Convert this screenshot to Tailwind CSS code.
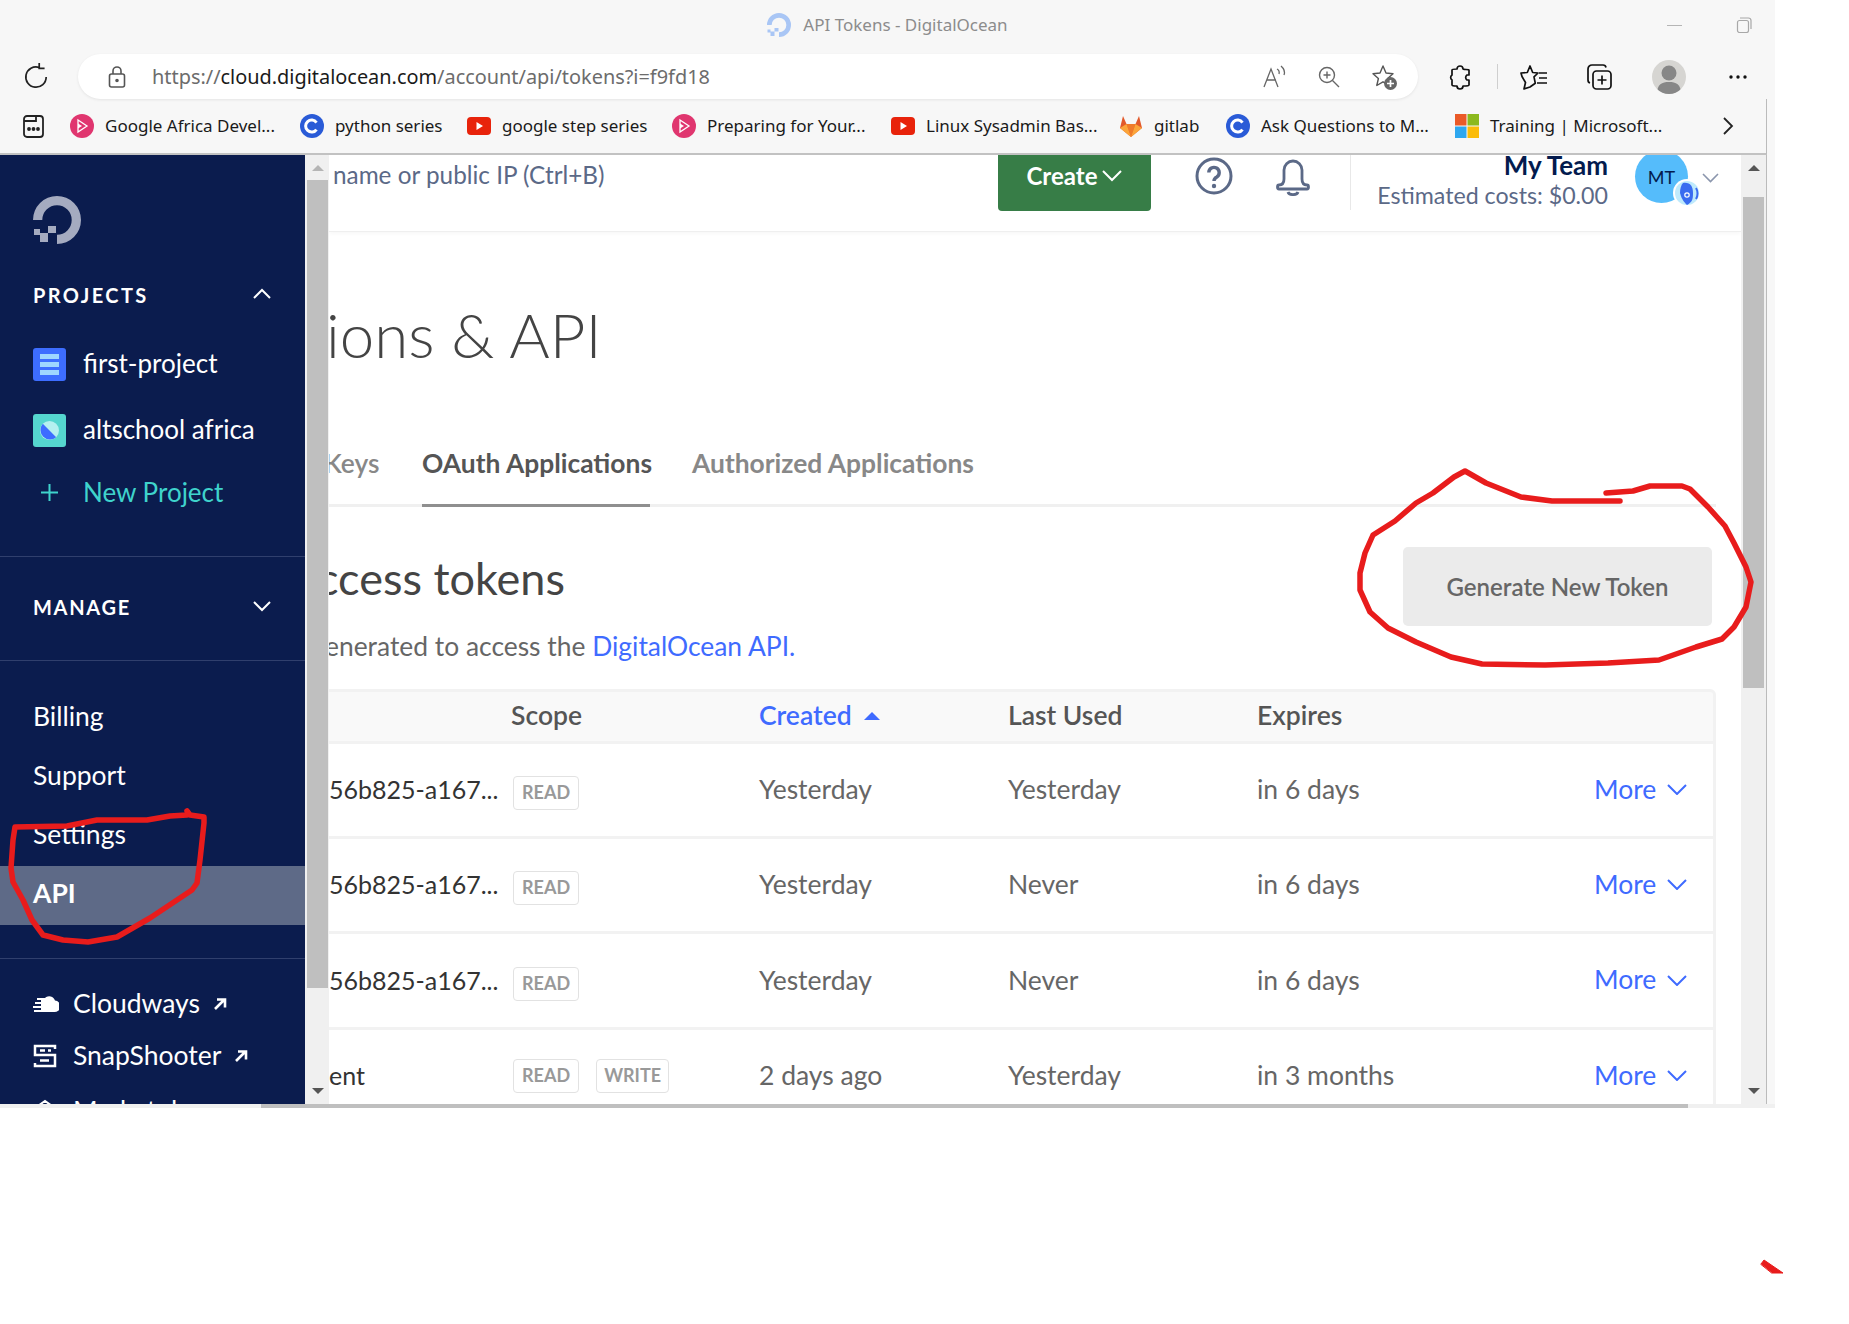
<!DOCTYPE html>
<html lang="en">
<head>
<meta charset="UTF-8" />
<title>API Tokens - DigitalOcean</title>
<script src="https://cdn.jsdelivr.net/npm/@tailwindcss/browser@4"></script>
</head>
<body class="bg-white">
<div class="relative w-[1849px] h-[1324px] overflow-hidden bg-white font-['Lato',sans-serif]">
  <div class="w-[1775px]">

    <!-- browser chrome -->
    <div class="bg-[#f7f7f7] font-['Noto_Sans',sans-serif]">
      <div class="h-[54px] grid grid-cols-[1fr_auto_1fr] items-center pb-[4px]">
        <div></div>
        <div class="flex items-center gap-[12px] text-[17px] text-[#8c8c8c]">
          <svg class="w-[24px] h-[24px]" viewBox="0 0 48 48" fill="#a9c6f5"><path d="M24 48v-9.300A14.700 14.700 0 1 0 9.300 24H0A24 24 0 1 1 24 48Z"/><path d="M15 30h8v7h-8zM7 37h8v9H7zM1 33h6v6H1z"/></svg>
          <span>API Tokens - DigitalOcean</span>
        </div>
        <div class="flex justify-end items-center pr-[23px]">
          <div class="w-[15px] h-px bg-[#b5b5b5] mr-[54px]"></div>
          <svg class="w-[16px] h-[16px]" viewBox="0 0 16 16" fill="none" stroke="#a8a8a8" stroke-width="1.200"><rect x="1.500" y="3.500" width="11" height="12" rx="2"/><path d="M4 1h8.500a2.500 2.500 0 0 1 2.500 2.500V12"/></svg>
        </div>
      </div>

      <div class="h-[45px] flex items-center">
        <svg class="w-[30px] h-[30px] ml-[21px]" viewBox="0 0 28 28" fill="none" stroke="#222" stroke-width="1.600"><path d="M23.500 14A9.500 9.500 0 1 1 17 5"/><path d="M17 1v5h5"/></svg>
        <div class="ml-[27px] w-[1340px] h-[45px] bg-white rounded-full shadow-[0_1px_3px_rgba(0,0,0,0.08)] flex items-center">
          <svg class="w-[22px] h-[24px] ml-[28px]" viewBox="0 0 22 24" fill="none" stroke="#555" stroke-width="1.600"><rect x="3.500" y="9" width="15" height="13" rx="2"/><path d="M7 9V6a4 4 0 0 1 8 0v3"/><circle cx="11" cy="15.500" r="1" fill="#555"/></svg>
          <div class="ml-[24px] text-[19.900px] text-[#6c6c6c]">https://<span class="text-[#1a1a1a]">cloud.digitalocean.com</span>/account/api/tokens?i=f9fd18</div>
          <div class="ml-auto flex items-center gap-[30px] mr-[21px]">
            <svg class="w-[24px] h-[24px]" viewBox="0 0 24 24" fill="none" stroke="#666" stroke-width="1.300"><path d="M1 22 8 4l7 18M4 15h9"/><path d="M14 4c2 1 2.500 3 2 5M18 1c3 2.500 4 6 3 9"/></svg>
            <svg class="w-[24px] h-[24px]" viewBox="0 0 24 24" fill="none" stroke="#666" stroke-width="1.400"><circle cx="10" cy="10" r="7.500"/><path d="M15.500 15.500 22 22M10 6.500v7M6.500 10h7"/></svg>
            <svg class="w-[26px] h-[26px]" viewBox="0 0 26 26" fill="none" stroke="#555" stroke-width="1.400" stroke-linejoin="round"><path d="m12 2 3 7 7 .7-5.400 4.800 1.600 7-6.200-3.700L5.800 21.500l1.600-7L2 9.700 9 9z"/><circle cx="19.500" cy="19.500" r="6.500" fill="#666" stroke="none"/><path d="M19.500 16v7M16 19.500h7" stroke="#fff" stroke-width="1.700"/></svg>
          </div>
        </div>
        <svg class="w-[24px] h-[26px] ml-[30px]" viewBox="0 0 24 26" fill="none" stroke="#111" stroke-width="1.700" stroke-linejoin="round"><path d="M9 5a3 3 0 0 1 6 0c0 1 6 0 6 1v5h-2a3 3 0 0 0 0 5h2v5c0 1-5 1-6 1a3 3 0 0 1-6 0c-1 0-5 0-5-1v-5a3 3 0 0 1 0-5V6c0-1 4-1 5-1z"/></svg>
        <div class="w-px h-[25px] bg-[#cfcfcf] ml-[25px]"></div>
        <svg class="w-[28px] h-[26px] ml-[22px]" viewBox="0 0 28 26" fill="none" stroke="#111" stroke-width="1.700" stroke-linejoin="round"><path d="m10 2 2.700 6.500 5.300.5-4 3.800 1.300 6.500L10 23l-6 2 1.500-6.500L2 12.500 1 9l6.300-.5z"/><path d="M19 9h8M19 14h8M17 19h10"/></svg>
        <svg class="w-[28px] h-[28px] ml-[37px]" viewBox="0 0 28 28" fill="none" stroke="#111" stroke-width="1.700"><rect x="8" y="8" width="18" height="18" rx="3.500"/><path d="M17 12.500v9M12.500 17h9M21 4.500A3 3 0 0 0 18 2H7a4 4 0 0 0-4 4v11a3 3 0 0 0 2 3"/></svg>
        <div class="ml-[39px] w-[34px] h-[34px] rounded-full bg-[#d6d5d2] overflow-hidden">
          <svg class="w-[34px] h-[34px]" viewBox="0 0 34 34" fill="#878787"><circle cx="17" cy="13" r="7.500"/><path d="M5 34c0-10 5-12 12-12s12 2 12 12z"/></svg>
        </div>
        <svg class="w-[20px] h-[6px] ml-[42px]" viewBox="0 0 20 6" fill="#111"><circle cx="3" cy="3" r="1.700"/><circle cx="10" cy="3" r="1.700"/><circle cx="17" cy="3" r="1.700"/></svg>
      </div>

      <!-- bookmarks -->
      <div class="h-[56px] mr-[8px] border-b-[2px] border-[#c2c2c2] border-r border-r-[#bbbbbb] flex items-center text-[17px] text-[#1a1a1a] whitespace-nowrap">
        <svg class="w-[23px] h-[24px] ml-[22px] mr-[25px]" viewBox="0 0 23 24" fill="none" stroke="#222" stroke-width="1.800"><path d="M2 5a3 3 0 0 1 3-3h13a3 3 0 0 1 3 3v15a3 3 0 0 1-3 3H5a3 3 0 0 1-3-3zM2 7h12V2"/><circle cx="7" cy="15" r="1" fill="#222"/><circle cx="11.500" cy="15" r="1" fill="#222"/><circle cx="16" cy="15" r="1" fill="#222"/></svg>

        <div class="w-[230px] flex items-center gap-[11px]">
          <svg class="w-[24px] h-[24px]" viewBox="0 0 24 24"><circle cx="12" cy="12" r="12" fill="#e0366f"/><path d="M8 6l9 6-9 6z" fill="none" stroke="#fff" stroke-width="1.300"/><path d="M8 9.500l4 2.500-4 2.500z" fill="#fff"/></svg>
          <span>Google Africa Devel...</span>
        </div>
        <div class="w-[167px] flex items-center gap-[11px]">
          <svg class="w-[24px] h-[24px]" viewBox="0 0 24 24"><circle cx="12" cy="12" r="12" fill="#2a5bd7"/><path d="M16.500 8.500a6 6 0 1 0 0 7" fill="none" stroke="#fff" stroke-width="3"/></svg>
          <span>python series</span>
        </div>
        <div class="w-[205px] flex items-center gap-[11px]">
          <svg class="w-[24px] h-[18px]" viewBox="0 0 24 18"><rect width="24" height="18" rx="4" fill="#e8230b"/><path d="M9.500 5v8l6.500-4z" fill="#fff"/></svg>
          <span>google step series</span>
        </div>
        <div class="w-[219px] flex items-center gap-[11px]">
          <svg class="w-[24px] h-[24px]" viewBox="0 0 24 24"><circle cx="12" cy="12" r="12" fill="#e0366f"/><path d="M8 6l9 6-9 6z" fill="none" stroke="#fff" stroke-width="1.300"/><path d="M8 9.500l4 2.500-4 2.500z" fill="#fff"/></svg>
          <span>Preparing for Your...</span>
        </div>
        <div class="w-[228px] flex items-center gap-[11px]">
          <svg class="w-[24px] h-[18px]" viewBox="0 0 24 18"><rect width="24" height="18" rx="4" fill="#e8230b"/><path d="M9.500 5v8l6.500-4z" fill="#fff"/></svg>
          <span>Linux Sysadmin Bas...</span>
        </div>
        <div class="w-[107px] flex items-center gap-[11px]">
          <svg class="w-[24px] h-[24px]" viewBox="0 0 24 24"><path d="M12 23 1 14l3-12 3.500 8h9L20 2l3 12z" fill="#e2592a"/><path d="M12 23 7.500 10h9z" fill="#ef7b2a"/><path d="M12 23 1 14l6.500-4zM12 23l11-9-6.500-4z" fill="#fba53a"/></svg>
          <span>gitlab</span>
        </div>
        <div class="w-[229px] flex items-center gap-[11px]">
          <svg class="w-[24px] h-[24px]" viewBox="0 0 24 24"><circle cx="12" cy="12" r="12" fill="#2a5bd7"/><path d="M16.500 8.500a6 6 0 1 0 0 7" fill="none" stroke="#fff" stroke-width="3"/></svg>
          <span>Ask Questions to M...</span>
        </div>
        <div class="w-[263px] flex items-center gap-[11px]">
          <svg class="w-[24px] h-[24px]" viewBox="0 0 24 24"><path fill="#ea5a28" d="M0 0h11.500v11.500H0z"/><path fill="#8cb91e" d="M12.500 0H24v11.500H12.500z"/><path fill="#2ea7ef" d="M0 12.500h11.500V24H0z"/><path fill="#fbbc09" d="M12.500 12.500H24V24H12.500z"/></svg>
          <span>Training | Microsoft...</span>
        </div>
        <svg class="w-[12px] h-[20px] ml-[4px]" viewBox="0 0 12 20" fill="none" stroke="#222" stroke-width="1.800"><path d="m2 2 8 8-8 8"/></svg>
      </div>
    </div>

    <!-- page -->
    <div class="flex h-[949px]">

      <!-- sidebar -->
      <aside class="w-[305px] h-full shrink-0 bg-[#0b1c4e] text-white overflow-hidden text-[26px]">
        <svg class="w-[48px] h-[48px] ml-[33px] mt-[41px]" viewBox="0 0 48 48" fill="#a5abc0"><path d="M24 48v-9.300A14.700 14.700 0 1 0 9.300 24H0A24 24 0 1 1 24 48Z"/><path d="M15 30h8v7h-8zM7 37h8v9H7zM1 33h6v6H1z"/></svg>

        <div class="h-[40px] mt-[31px] pl-[33px] pr-[34px] flex items-center justify-between text-[20px] font-bold tracking-[2.400px]">
          <span class="mb-[1px]">PROJECTS</span>
          <svg class="w-[18px] h-[12px] mb-[3px]" viewBox="0 0 18 12" fill="none" stroke="#fff" stroke-width="2"><path d="m1 10 8-8 8 8"/></svg>
        </div>

        <div class="h-[66px] mt-[16px] pl-[33px] flex items-center">
          <svg class="w-[33px] h-[33px] mr-[17px]" viewBox="0 0 33 33"><rect width="33" height="33" rx="3" fill="#3d6dff"/><path d="M7 6h19v5H7zM7 14h19v5H7zM7 22h19v5H7z" fill="#9fd6ff"/></svg>
          <span class="mb-[2px]">first-project</span>
        </div>
        <div class="h-[66px] pl-[33px] flex items-center">
          <svg class="w-[33px] h-[33px] mr-[17px]" viewBox="0 0 33 33"><rect width="33" height="33" rx="3" fill="#55d6cf"/><circle cx="16.500" cy="16.500" r="9.500" fill="#b5f0f0"/><path d="M9.800 9.800a9.500 9.500 0 0 0 13.400 13.400z" fill="#3d6dff"/></svg>
          <span class="mb-[2px]">altschool africa</span>
        </div>
        <div class="h-[58px] pl-[40px] flex items-center text-[#3fd3cc]">
          <svg class="w-[19px] h-[19px] mr-[24px]" viewBox="0 0 19 19" fill="none" stroke="#3fd3cc" stroke-width="2"><path d="M9.500 1v17M1 9.500h17"/></svg>
          <span>New Project</span>
        </div>

        <div class="mt-[35px] h-[105px] border-y border-[#303f6d] pl-[33px] pr-[34px] flex items-center justify-between text-[20px] font-bold tracking-[1.700px]">
          <span class="mb-[3px]">MANAGE</span>
          <svg class="w-[18px] h-[12px] mb-[6px]" viewBox="0 0 18 12" fill="none" stroke="#fff" stroke-width="2"><path d="m1 2 8 8 8-8"/></svg>
        </div>

        <div class="mt-[28px] border-b border-[#303f6d] pb-[33px] text-[26.500px]">
          <div class="h-[59px] pl-[33px] pb-[4px] flex items-center">Billing</div>
          <div class="h-[59px] pl-[33px] pb-[4px] flex items-center">Support</div>
          <div class="h-[59px] pl-[33px] pb-[3px] flex items-center">Settings</div>
          <div class="h-[59px] pl-[33px] pb-[3px] flex items-center bg-[#5e6a87] font-bold">API</div>
        </div>

        <div class="mt-[19px] pl-[33px] text-[26.500px]">
          <div class="h-[52px] flex items-center">
            <svg class="w-[26px] h-[18px] mr-[14px]" viewBox="0 0 26 18" fill="#fff"><path d="M9 3h3a6 6 0 0 1 10 2.500A5 5 0 0 1 21 17H1v-2h7v-2H0v-2h8V9H2V7h6V5H4V3z"/></svg>
            <span>Cloudways</span>
            <svg class="w-[14px] h-[14px] ml-[13px]" viewBox="0 0 14 14" fill="none" stroke="#fff" stroke-width="2.600"><path d="M2 12 11 3M4 2.500h8v8"/></svg>
          </div>
          <div class="h-[52px] flex items-center">
            <svg class="w-[24px] h-[24px] mr-[16px]" viewBox="0 0 24 24" fill="none" stroke="#fff" stroke-width="2.500"><path d="M22 5V2H2v9h20v11H2v-3M7 6.500h5M7 16.500h9M15 6.500h3"/></svg>
            <span>SnapShooter</span>
            <svg class="w-[14px] h-[14px] ml-[13px]" viewBox="0 0 14 14" fill="none" stroke="#fff" stroke-width="2.600"><path d="M2 12 11 3M4 2.500h8v8"/></svg>
          </div>
          <div class="h-[52px] pt-[5px] flex items-center">
            <svg class="w-[24px] h-[24px] mr-[16px]" viewBox="0 0 24 24" fill="none" stroke="#fff" stroke-width="2"><path d="M2 9 12 2l10 7v13H2z"/></svg>
            <span>Marketplace</span>
          </div>
        </div>
      </aside>

      <!-- sidebar scrollbar -->
      <div class="w-[24px] h-full shrink-0 bg-[#f0f0f0] flex flex-col items-center pl-[1px]">
        <div class="h-[25px] flex items-center"><div class="w-0 h-0 border-x-[6px] border-x-transparent border-b-[6px] border-b-[#b5b5b5]"></div></div>
        <div class="w-[21px] h-[808px] bg-[#bfbfbf]"></div>
        <div class="mt-[100px] w-0 h-0 border-x-[6px] border-x-transparent border-t-[6px] border-t-[#555555]"></div>
      </div>

      <!-- main -->
      <main class="w-[1412px] h-full shrink-0 overflow-hidden bg-white text-[#666]">
        <div class="h-[77px] border-b border-[#efefef] shadow-[0_2px_4px_rgba(0,0,0,0.03)] flex items-start">
          <div class="w-[669px] h-[40px] pl-[4px] flex items-center text-[24.300px] text-[#5b6987]">name or public IP (Ctrl+B)</div>
          <div class="w-[153px] h-[56px] rounded-b-[4px] bg-[#377d47] text-white text-[24px] font-bold flex items-start justify-center gap-[5px] pt-[3px]">
            Create
            <svg class="w-[20px] h-[12px] mt-[12px]" viewBox="0 0 20 12" fill="none" stroke="#fff" stroke-width="2"><path d="m1 1 9 9 9-9"/></svg>
          </div>
          <svg class="w-[38px] h-[38px] ml-[44px] mt-[2px]" viewBox="0 0 38 38" fill="none" stroke="#5b6987" stroke-width="3"><circle cx="19" cy="19" r="17"/><path d="M13.800 15.500a5.200 5.200 0 1 1 8 4.500c-1.800 1-2.800 2-2.800 4" stroke-width="3.400"/><circle cx="19" cy="29" r="2.200" fill="#5b6987" stroke="none"/></svg>
          <svg class="w-[36px] h-[38px] ml-[42px] mt-[3px]" viewBox="0 0 36 38" fill="none" stroke="#5b6987" stroke-width="2.800"><path d="M4 27c3 0 5-2 5-6v-9a9 9 0 0 1 18 0v9c0 4 2 6 5 6 2 0 2 4 0 4H4c-2 0-2-4 0-4z"/><path d="M13 34c1 3.500 9 3.500 10 0"/></svg>
          <div class="w-px h-[55px] bg-[#e8e8e8] ml-[39px]"></div>
          <div class="w-[257px] text-right">
            <div class="h-[24px] leading-[20px] text-[26px] font-bold text-[#031b4e]">My Team</div>
            <div class="mt-[2px] text-[23.200px] leading-[28px] text-[#5b6987]">Estimated costs: $0.00</div>
          </div>
          <div class="relative w-[53px] h-[53px] ml-[27px] mt-[-5px] rounded-full bg-[#55bcfb] flex items-center justify-center text-[#031b4e] text-[18px] pt-[1px]">
            MT
            <svg class="absolute left-[38px] top-[29px] w-[28px] h-[28px]" viewBox="0 0 28 28"><circle cx="14" cy="14" r="14" fill="#fff"/><circle cx="14" cy="14" r="12" fill="#bfeafc"/><path d="M10 4c7-1 10 3 10 10s-1 9-6 12c-3-3-5-5-7-12 0-4 1-8 3-10z" fill="#3a6cf0"/><path d="M23 9c2 3 2 8 0 11" stroke="#3a6cf0" stroke-width="2" fill="none"/><circle cx="14" cy="16" r="2.200" fill="#3a6cf0" stroke="#fff" stroke-width="1.200"/></svg>
          </div>
          <svg class="w-[17px] h-[10px] ml-[14px] mt-[18px]" viewBox="0 0 17 10" fill="none" stroke="#8b96ad" stroke-width="1.600"><path d="m1 1 7.500 7.500L16 1"/></svg>
        </div>

        <div class="w-[1387px]">
          <h1 class="mt-[68px] -ml-[3px] h-[68px] text-[61.800px] leading-[68px] font-light text-[#444] whitespace-nowrap">ions &amp; API</h1>

          <div class="mt-[71px] h-[68px] border-b-[3px] border-[#f0f0f0] flex text-[26.400px] font-bold text-[#888]">
            <div class="w-[93px] overflow-hidden"><span class="block -ml-[5px] pt-[5px] font-semibold">Keys</span></div>
            <div class="w-[228px] h-[68px] border-b-[3px] border-[#8f8f8f] text-[#555] pt-[5px] whitespace-nowrap">OAuth Applications</div>
            <div class="ml-[42px] pt-[5px]">Authorized Applications</div>
          </div>

          <div class="h-[182px] flex justify-between pt-[40px] pr-[4px]">
            <div class="overflow-hidden w-[700px]">
              <div class="mt-[3px] -ml-[12px] h-[56px] text-[45px] leading-[56px] text-[#444] whitespace-nowrap">ccess tokens</div>
              <div class="mt-[23px] -ml-[4px] text-[26.400px] leading-[34px] whitespace-nowrap">enerated to access the <span class="text-[#3f6bff]">DigitalOcean API.</span></div>
            </div>
            <div class="w-[309px] h-[79px] rounded-[5px] bg-[#ebebeb] flex items-center justify-center text-[24px] font-semibold text-[#666]">Generate New Token</div>
          </div>

          <!-- tokens table -->
          <div class="text-[26.500px]">
            <div class="h-[55px] pb-[2px] bg-[#f9f9f9] border-y-[3px] border-r-[3px] border-[#f2f2f2] rounded-tr-[6px] grid grid-cols-[184px_246px_248px_249px_1fr] items-center font-semibold text-[#555]">
              <div></div>
              <div class="-ml-[2px]">Scope</div>
              <div class="text-[#3f6bff] flex items-center gap-[12px]">Created <div class="w-0 h-0 border-x-[8px] border-x-transparent border-b-[8px] border-b-[#3f6bff]"></div></div>
              <div class="ml-[1px]">Last Used</div>
              <div class="ml-[1px]">Expires</div>
            </div>

            <div class="h-[95px] border-b-[3px] border-r-[3px] border-[#f2f2f2] grid grid-cols-[184px_246px_249px_249px_337px_1fr] items-center">
              <div class="text-[25px] text-[#333] whitespace-nowrap">56b825-a167...</div>
              <div><span class="inline-block h-[34px] px-[8px] border border-[#e2e2e2] rounded-[4px] text-[18px] leading-[31px] font-bold text-[#999]">READ</span></div>
              <div>Yesterday</div>
              <div>Yesterday</div>
              <div>in 6 days</div>
              <div class="flex items-center gap-[11px] pb-[1px] text-[#3f6bff]">More <svg class="w-[20px] h-[11px]" viewBox="0 0 20 11" fill="none" stroke="#3f6bff" stroke-width="2"><path d="m1 1 9 9 9-9"/></svg></div>
            </div>
            <div class="h-[95px] border-b-[3px] border-r-[3px] border-[#f2f2f2] grid grid-cols-[184px_246px_249px_249px_337px_1fr] items-center">
              <div class="text-[25px] text-[#333] whitespace-nowrap">56b825-a167...</div>
              <div><span class="inline-block h-[34px] px-[8px] border border-[#e2e2e2] rounded-[4px] text-[18px] leading-[31px] font-bold text-[#999]">READ</span></div>
              <div>Yesterday</div>
              <div>Never</div>
              <div>in 6 days</div>
              <div class="flex items-center gap-[11px] pb-[1px] text-[#3f6bff]">More <svg class="w-[20px] h-[11px]" viewBox="0 0 20 11" fill="none" stroke="#3f6bff" stroke-width="2"><path d="m1 1 9 9 9-9"/></svg></div>
            </div>
            <div class="h-[96px] border-b-[3px] border-r-[3px] border-[#f2f2f2] grid grid-cols-[184px_246px_249px_249px_337px_1fr] items-center">
              <div class="text-[25px] text-[#333] whitespace-nowrap">56b825-a167...</div>
              <div><span class="inline-block h-[34px] px-[8px] border border-[#e2e2e2] rounded-[4px] text-[18px] leading-[31px] font-bold text-[#999]">READ</span></div>
              <div>Yesterday</div>
              <div>Never</div>
              <div>in 6 days</div>
              <div class="flex items-center gap-[11px] pb-[1px] text-[#3f6bff]">More <svg class="w-[20px] h-[11px]" viewBox="0 0 20 11" fill="none" stroke="#3f6bff" stroke-width="2"><path d="m1 1 9 9 9-9"/></svg></div>
            </div>
            <div class="h-[95px] border-b-[3px] border-r-[3px] border-[#f2f2f2] grid grid-cols-[184px_246px_249px_249px_337px_1fr] items-center">
              <div class="text-[25px] text-[#333] whitespace-nowrap">ent</div>
              <div class="flex gap-[17px]"><span class="inline-block h-[34px] px-[8px] border border-[#e2e2e2] rounded-[4px] text-[18px] leading-[31px] font-bold text-[#999]">READ</span><span class="inline-block h-[34px] px-[7px] border border-[#e2e2e2] rounded-[4px] text-[18px] leading-[31px] font-bold text-[#999]">WRITE</span></div>
              <div>2 days ago</div>
              <div>Yesterday</div>
              <div>in 3 months</div>
              <div class="flex items-center gap-[11px] pb-[1px] text-[#3f6bff]">More <svg class="w-[20px] h-[11px]" viewBox="0 0 20 11" fill="none" stroke="#3f6bff" stroke-width="2"><path d="m1 1 9 9 9-9"/></svg></div>
            </div>
          </div>
        </div>
      </main>

      <!-- page scrollbar -->
      <div class="w-[25px] h-full shrink-0 bg-[#f0f0f0] flex flex-col items-center">
        <div class="h-[42px] flex items-center pb-[16px]"><div class="w-0 h-0 border-x-[6px] border-x-transparent border-b-[6px] border-b-[#555555]"></div></div>
        <div class="w-[21px] h-[491px] bg-[#bfbfbf]"></div>
        <div class="mt-[400px] w-0 h-0 border-x-[6px] border-x-transparent border-t-[6px] border-t-[#555555]"></div>
      </div>
      <div class="w-px h-full bg-[#bbbbbb]"></div>
      <div class="w-[8px] h-full bg-[#f7f7f7]"></div>
    </div>

    <!-- horizontal scrollbar -->
    <div class="h-[4px] bg-[#f0f0f0]"><div class="ml-[261px] w-[1427px] h-[4px] bg-[#bfbfbf]"></div></div>
  </div>

  <!-- red pen annotations, drawn over the screenshot -->
  <svg class="absolute left-0 top-0 w-[1849px] h-[1324px] pointer-events-none" viewBox="0 0 1849 1324" fill="none" stroke="#e81c1c" stroke-width="5.500" stroke-linecap="round" stroke-linejoin="round">
    <path d="M1606 493 1633 491 1650 486H1682L1690 489 1708 507 1725 526 1734 543 1746 567 1751 582 1746 607 1734 627 1722 639 1696 647 1659 660 1608 663 1545 665 1482 664 1451 657 1416 642 1388 628 1370 612 1360 590V573L1365 553 1373 535 1395 521 1416 503 1433 493 1454 477 1465 471 1486 483 1521 497 1552 501H1620"/>
    <path d="M187 811 190 815 204 817V823L200 860 197 883 192 890 150 918 117 937 88 942 63 940 43 935 32 920 23 900 13 882 11 868 13 840 15 827 67 826 97 820H147L170 816 187 815"/>
    <path d="M1761 1264 1764 1260 1783 1273H1772Z" fill="#e81c1c" stroke-width="1"/>
  </svg>
</div>
</body>
</html>
